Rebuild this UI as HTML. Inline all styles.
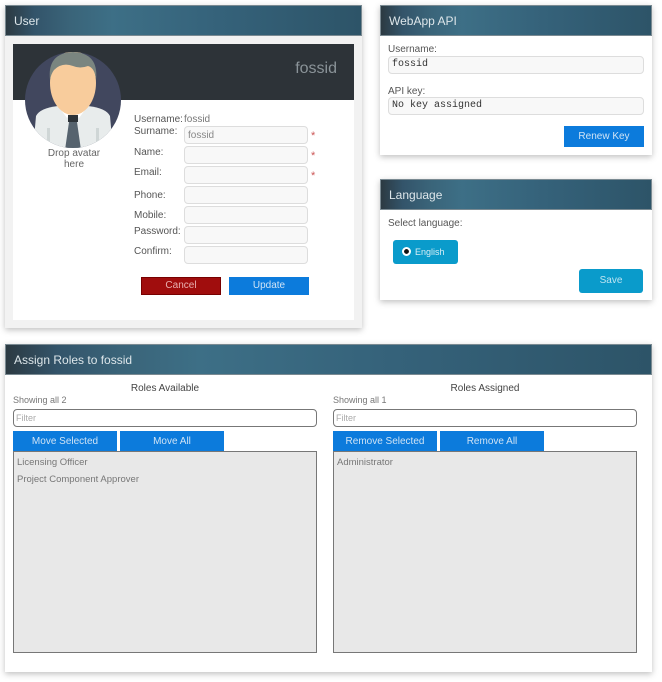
<!DOCTYPE html>
<html><head><meta charset="utf-8"><style>
*{box-sizing:border-box;margin:0;padding:0}
body{width:662px;height:682px;background:#fff;font-family:"Liberation Sans",sans-serif;color:#555;position:relative;overflow:hidden}
.a{position:absolute}
.panel{position:absolute;background:#fff;box-shadow:0 2px 6px rgba(0,0,0,.25)}
.hd{position:absolute;left:0;right:0;top:0;height:31px;border:1px solid #7a8a92;background:linear-gradient(90deg,#2c3a42 0%,#33546a 8%,#3a6479 18%,#3d6f86 30%,#35627a 60%,#2d5468 100%);color:#dde6ea;font-size:12px;padding:8px 0 0 8px}
.inp{position:absolute;background:#f8f8f8;border:1px solid #ddd;border-radius:4px}
.lbl{position:absolute;font-size:10px;color:#555}
.star{position:absolute;color:#c55;font-size:11px}
.btn{position:absolute;color:#cfe3f5;font-size:10px;text-align:center}
</style></head><body>

<div class="panel" style="left:5px;top:5px;width:357px;height:323px;background:#f2f2f2">
<div class="hd">User</div>
<div class="a" style="left:8px;top:39px;width:341px;height:276px;background:#fff"></div>
<div class="a" style="left:8px;top:39px;width:341px;height:56px;background:#2d3338"></div>
<div class="a" style="right:25px;top:55px;font-size:16px;color:#8a9398">fossid</div>
</div>
<svg class="a" style="left:0;top:0" width="130" height="150">
<defs><clipPath id="c"><circle cx="73" cy="100" r="48"/></clipPath></defs>
<circle cx="73" cy="100" r="48" fill="#41475e"/>
<g clip-path="url(#c)">
<path d="M33 150 L36 116 Q40 108 58 106 L88 106 Q106 108 110 116 L113 150Z" fill="#e8ecec"/>
<path d="M58 106 L67 118 L73 112 L79 118 L88 106Z" fill="#fff"/>
<rect x="64" y="100" width="18" height="10" fill="#f5c896"/>
<rect x="68" y="115" width="10" height="7" fill="#2d3338"/>
<path d="M69 122 L77 122 L81 150 L65 150Z" fill="#56636e"/>
<rect x="47" y="128" width="3" height="22" fill="#cfd6d6"/>
<rect x="96" y="128" width="3" height="22" fill="#cfd6d6"/>
<ellipse cx="73" cy="83" rx="23" ry="32" fill="#f8cc9c"/>
<path d="M50 80 Q47 53 73 52 Q99 53 96 80 Q95 68 88 66 Q80 69 73 66 Q62 62 54 70 Q51 74 50 80Z" fill="#7a8580"/>
</g>
</svg>
<div class="a" style="left:40px;top:148px;width:68px;text-align:center;font-size:10px;line-height:11px;color:#666">Drop avatar here</div>
<div class="lbl" style="left:134px;top:114px">Username:</div><div class="lbl" style="left:184px;top:114px;color:#777">fossid</div>
<div class="lbl" style="left:134px;top:126px">Surname:</div>
<div class="lbl" style="left:134px;top:147px">Name:</div>
<div class="lbl" style="left:134px;top:167px">Email:</div>
<div class="lbl" style="left:134px;top:190px">Phone:</div>
<div class="lbl" style="left:134px;top:210px">Mobile:</div>
<div class="lbl" style="left:134px;top:226px">Password:</div>
<div class="lbl" style="left:134px;top:246px">Confirm:</div>
<div class="inp" style="left:184px;top:126px;width:124px;height:18px;font-size:10px;color:#888;padding:3px 3px">fossid</div>
<div class="inp" style="left:184px;top:146px;width:124px;height:18px"></div>
<div class="inp" style="left:184px;top:166px;width:124px;height:18px"></div>
<div class="inp" style="left:184px;top:186px;width:124px;height:18px"></div>
<div class="inp" style="left:184px;top:206px;width:124px;height:18px"></div>
<div class="inp" style="left:184px;top:226px;width:124px;height:18px"></div>
<div class="inp" style="left:184px;top:246px;width:124px;height:18px"></div>
<div class="star" style="left:311px;top:130px">*</div>
<div class="star" style="left:311px;top:150px">*</div>
<div class="star" style="left:311px;top:170px">*</div>
<div class="btn" style="left:141px;top:277px;width:80px;height:18px;background:#a00d0d;border:1px solid #700;line-height:16px;color:#e8b0b0">Cancel</div>
<div class="btn" style="left:229px;top:277px;width:80px;height:18px;background:#0c7bdc;line-height:18px">Update</div>

<div class="panel" style="left:380px;top:5px;width:272px;height:150px">
<div class="hd">WebApp API</div>
<div class="lbl" style="left:8px;top:39px">Username:</div>
<div class="inp" style="left:8px;top:51px;width:256px;height:18px;font-family:'Liberation Mono',monospace;font-size:10px;color:#333;padding:2px 3px">fossid</div>
<div class="lbl" style="left:8px;top:81px">API key:</div>
<div class="inp" style="left:8px;top:92px;width:256px;height:18px;font-family:'Liberation Mono',monospace;font-size:10px;color:#333;padding:2px 3px">No key assigned</div>
<div class="btn" style="left:184px;top:121px;width:80px;height:21px;background:#0c7bdc;line-height:21px">Renew Key</div>
</div>

<div class="panel" style="left:380px;top:179px;width:272px;height:121px">
<div class="hd">Language</div>
<div class="lbl" style="left:8px;top:39px">Select language:</div>
<div class="a" style="left:13px;top:61px;width:65px;height:24px;background:#0a9bcb;border-radius:3px;font-size:9px;color:#d8eef6;padding:7px 0 0 22px">English</div>
<div class="a" style="left:22px;top:68px;width:9px;height:9px;border-radius:50%;background:#fff;border:2.5px solid #fff;box-shadow:inset 0 0 0 3px #111"></div>
<div class="btn" style="left:199px;top:90px;width:64px;height:24px;background:#0a9bcb;border-radius:3px;line-height:24px;color:#bfe4f2">Save</div>
</div>

<div class="panel" style="left:5px;top:344px;width:647px;height:328px">
<div class="hd">Assign Roles to fossid</div>
</div>
<div class="a" style="left:13px;top:383px;width:304px;text-align:center;font-size:10px;color:#444">Roles Available</div>
<div class="a" style="left:333px;top:383px;width:304px;text-align:center;font-size:10px;color:#444">Roles Assigned</div>
<div class="lbl" style="left:13px;top:395px;font-size:9px;color:#777">Showing all 2</div>
<div class="lbl" style="left:333px;top:395px;font-size:9px;color:#777">Showing all 1</div>
<div class="a" style="left:13px;top:409px;width:304px;height:18px;border:1px solid #777;border-radius:4px;font-size:9px;color:#aaa;padding:3px 2px">Filter</div>
<div class="a" style="left:333px;top:409px;width:304px;height:18px;border:1px solid #777;border-radius:4px;font-size:9px;color:#aaa;padding:3px 2px">Filter</div>
<div class="btn" style="left:13px;top:431px;width:104px;height:21px;background:#0c7bdc;line-height:22px">Move Selected</div>
<div class="btn" style="left:120px;top:431px;width:104px;height:21px;background:#0c7bdc;line-height:22px">Move All</div>
<div class="btn" style="left:333px;top:431px;width:104px;height:21px;background:#0c7bdc;line-height:22px">Remove Selected</div>
<div class="btn" style="left:440px;top:431px;width:104px;height:21px;background:#0c7bdc;line-height:22px">Remove All</div>
<div class="a" style="left:13px;top:451px;width:304px;height:202px;background:#e8e8e8;border:1px solid #777;font-size:9.5px;color:#777;padding:2px 3px;line-height:17px">Licensing Officer<br>Project Component Approver</div>
<div class="a" style="left:333px;top:451px;width:304px;height:202px;background:#e8e8e8;border:1px solid #777;font-size:9.5px;color:#777;padding:2px 3px;line-height:17px">Administrator</div>
</body></html>
